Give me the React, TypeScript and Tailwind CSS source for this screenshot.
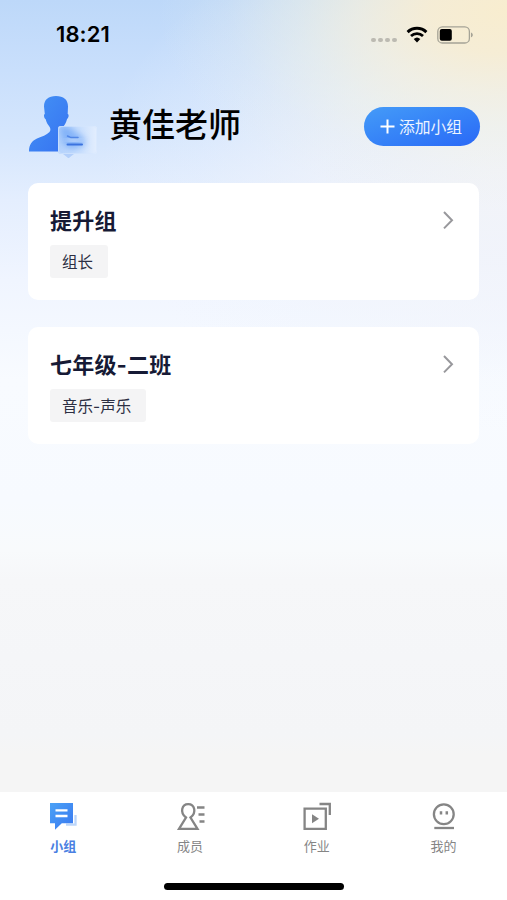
import type { ReactNode } from 'react';

interface Group {
  name: string;
  tag: string;
}

interface Tab {
  label: string;
  icon: ReactNode;
  active?: boolean;
}

const groups: Group[] = [
  { name: '提升组', tag: '组长' },
  { name: '七年级-二班', tag: '音乐-声乐' },
];

function StatusBar(): ReactNode {
  return (
    <div className="flex h-[69px] items-center justify-between pr-[33px] pl-[56px]">
      <span className="mb-[1px] font-['Inter'] text-[22px] leading-none font-semibold tracking-[0.1px] text-black">
        18:21
      </span>
      <div className="flex items-center">
        <div className="mt-[11px] mr-[9px] flex gap-[2.4px]">
          <i className="size-[4.6px] rounded-full bg-[#bcbab2]" />
          <i className="size-[4.6px] rounded-full bg-[#bcbab2]" />
          <i className="size-[4.6px] rounded-full bg-[#bcbab2]" />
          <i className="size-[4.6px] rounded-full bg-[#bcbab2]" />
        </div>
        <svg width="22" height="17" viewBox="0 0 22 17" className="mr-[9px]">
          <path d="M1.6 6.1a13.6 13.6 0 0 1 18.8 0" fill="none" stroke="#000" strokeWidth="3" />
          <path d="M5 10a8.7 8.7 0 0 1 12 0" fill="none" stroke="#000" strokeWidth="2.8" />
          <path d="M11 16.4 7.7 13a4.8 4.8 0 0 1 6.6 0Z" fill="#000" />
        </svg>
        <svg width="37" height="18" viewBox="0 0 37 18">
          <rect x="0.8" y="0.8" width="31.6" height="16.2" rx="4.6" fill="none" stroke="#a5a396" strokeWidth="1.3" />
          <rect x="2.8" y="3" width="12" height="11.8" rx="2" fill="#000" />
          <path d="M34 6.5c2.4.8 2.4 4 0 4.8Z" fill="#a5a396" />
        </svg>
      </div>
    </div>
  );
}

function Avatar(): ReactNode {
  return (
    <svg width="72" height="66" viewBox="0 0 72 66" className="mt-[4px]">
      <defs>
        <linearGradient id="person" x1="0" y1="0" x2="1" y2="1">
          <stop offset="0" stopColor="#4493f5" />
          <stop offset="1" stopColor="#3672f1" />
        </linearGradient>
        <linearGradient id="bubble" x1="0" y1="0" x2="1" y2="0">
          <stop offset="0" stopColor="#b4d2fc" />
          <stop offset="0.55" stopColor="#c9dffd" />
          <stop offset="1" stopColor="#e3eefe" />
        </linearGradient>
        <clipPath id="bubbleClip">
          <rect x="31" y="31" width="39" height="28" rx="3" />
        </clipPath>
        <clipPath id="personClip">
          <path d="M0 0h72v31H34a3 3 0 0 0-3 3v23H0Z" />
        </clipPath>
        <filter id="soft" x="-50%" y="-50%" width="200%" height="200%">
          <feGaussianBlur stdDeviation="3" />
        </filter>
      </defs>
      <path
        d="M29 1C36.500 1 41 4.500 41 11.500L40.700 19c1.500.300 1.100 3.800-.7 5.200-1 4-2.800 6.300-4.500 8.300V56.500H2C2 49.500 5 46 10 43.600c5-2.300 9.500-3.300 12.500-6.600 1.500-2 1-4-.500-6-1.600-2-2.600-3.800-3.300-6.800-1.800-1.100-2.200-4.900-.900-5.200L17 11.500C17 4.500 21.500 1 29 1Z"
        fill="url(#person)"
        clipPath="url(#personClip)"
      />
      <rect x="31" y="31" width="39" height="28" rx="3" fill="url(#bubble)" />
      <path d="M36 59h11l-4.500 3.500q-1 1-2 0Z" fill="#b3cffa" />
      <g clipPath="url(#bubbleClip)">
        <path d="M32 31h9l17 13-1 7-13 3-8-5Z" fill="#5595f5" opacity="0.55" filter="url(#soft)" />
        <path d="M40 44q4 2 14 2" fill="none" stroke="#e4effe" strokeWidth="5" opacity="0.7" filter="url(#soft)" />
      </g>
      <rect x="31.5" y="31.5" width="38" height="27" rx="3" fill="none" stroke="#d6e6fd" strokeWidth="1" opacity="0.6" />
      <path d="M40.500 41 44 42.600h7" fill="none" stroke="#3b73df" strokeWidth="1.500" strokeLinecap="round" opacity="0.7" />
      <path d="M40.500 49.500h14.500" stroke="#3b73df" strokeWidth="2" strokeLinecap="round" />
    </svg>
  );
}

function Header(): ReactNode {
  return (
    <header className="flex h-[114px] items-center pr-[27px] pl-[27px]">
      <Avatar />
      <h1 className="mb-px ml-[10px] flex-1 text-[33px] leading-none font-medium text-black">黄佳老师</h1>
      <button className="flex h-[39px] w-[116px] items-center justify-center gap-[4px] rounded-full bg-linear-to-br from-[#459bf8] to-[#2b68f6] pr-[2px] text-[#edf4ff]">
        <svg width="15" height="15" viewBox="0 0 15 15">
          <path d="M7.500.500v14M.500 7.500h14" stroke="#fff" strokeWidth="2" />
        </svg>
        <span className="pt-[3px] text-[15.8px] leading-none">添加小组</span>
      </button>
    </header>
  );
}

function GroupCard({ group }: { group: Group }): ReactNode {
  return (
    <section className="flex h-[117px] items-start justify-between rounded-[10px] bg-white px-[22px]">
      <div className="flex flex-col items-start pt-[25px]">
        <h2 className="text-[22px] leading-[26px] font-bold tracking-[0.2px] text-[#161a35]">{group.name}</h2>
        <span className="mt-[11px] flex h-[33px] items-center rounded-[3px] bg-[#f4f4f5] pt-[2px] pr-[15px] pl-[12px] text-[15.5px] leading-none text-[#2c2f43]">
          {group.tag}
        </span>
      </div>
      <svg width="12" height="20" viewBox="0 0 12 20" className="mt-[27px] mr-[3px]">
        <path d="m2 2 8 8.200-8 8.200" fill="none" stroke="#98989c" strokeWidth="2" />
      </svg>
    </section>
  );
}

const tabs: Tab[] = [
  {
    label: '小组',
    active: true,
    icon: (
      <svg width="30" height="30" viewBox="0 0 30 30">
        <defs>
          <linearGradient id="chat" x1="0" y1="0" x2="1" y2="1">
            <stop offset="0" stopColor="#4ba2f6" />
            <stop offset="1" stopColor="#3978f0" />
          </linearGradient>
        </defs>
        <path d="M27.500 13v9.700H18" fill="none" stroke="#bcd6fa" strokeWidth="2.300" />
        <path d="M2 1h23v20.200H13.800L7 27.700v-6.500H2Z" fill="url(#chat)" />
        <path d="M7.500 8.300h12M7.500 14h12" stroke="#fff" strokeWidth="2.300" />
      </svg>
    ),
  },
  {
    label: '成员',
    icon: (
      <svg width="30" height="30" viewBox="0 0 30 30" fill="none" stroke="#858585" strokeWidth="2.300">
        <path d="M11 15.500C4.500 10.500 6.800 2.200 13.200 2.200S22 10.500 15.500 15.500l7 11.300H4Z" />
        <path d="M22 5.500h7.500M23.500 12.500h6M24.500 19.500h5" />
      </svg>
    ),
  },
  {
    label: '作业',
    icon: (
      <svg width="30" height="30" viewBox="0 0 30 30" fill="none" stroke="#858585" strokeWidth="2.300">
        <path d="M2.600 6.600h21.200v20.200H2.600Z" />
        <path d="M17.500 2h10.300v11" />
        <path d="M10 12.300v9l7-4.500Z" fill="#858585" stroke="none" />
      </svg>
    ),
  },
  {
    label: '我的',
    icon: (
      <svg width="30" height="30" viewBox="0 0 30 30" fill="none" stroke="#858585" strokeWidth="2.300">
        <circle cx="14.800" cy="12.200" r="9.900" />
        <path d="M5.300 26h19.700" />
        <path d="M12 9.300v3.200M17.800 9.300v3.200" strokeWidth="2.500" />
      </svg>
    ),
  },
];

function TabBar(): ReactNode {
  return (
    <nav className="flex h-[108px] flex-col items-center bg-white">
      <div className="grid w-full grid-cols-4 pt-[10px]">
        {tabs.map((tab) => (
          <div key={tab.label} className="flex flex-col items-center">
            {tab.icon}
            <span
              className={
                tab.active
                  ? 'mt-[7px] text-[13px] leading-[14px] font-bold text-[#4a80e2]'
                  : 'mt-[7px] text-[13px] leading-[14px] text-[#858585]'
              }
            >
              {tab.label}
            </span>
          </div>
        ))}
      </div>
      <div className="mt-auto mb-[10px] ml-px h-[7px] w-[180px] rounded-full bg-black" />
    </nav>
  );
}

export default function App(): ReactNode {
  return (
    <div className="flex h-[900px] w-[507px] flex-col overflow-hidden bg-[radial-gradient(ellipse_350px_200px_at_507px_10px,#f8edcf_0%,#f7edd3f0_22%,#f4efdcb8_42%,#eff0e278_60%,#e8ede830_80%,#e4ecf200_100%),radial-gradient(ellipse_400px_260px_at_500px_170px,#f3f4f8_0%,#f2f4faa8_45%,#f0f4fc40_75%,#eff5fd00_100%),linear-gradient(180deg,#bdd8f9_0px,#c9dffc_70px,#d5e6fd_140px,#e4eefe_200px,#f0f5ff_280px,#f8fbff_380px,#f7faff_500px,#f8fafc_550px,#f6f7f9_580px,#f4f5f7_735px,#f5f5f5_755px)] font-['Inter','Noto_Sans_CJK_SC',sans-serif]">
      <StatusBar />
      <Header />
      <main className="flex flex-1 flex-col gap-[27px] px-[28px]">
        {groups.map((group) => (
          <GroupCard key={group.name} group={group} />
        ))}
      </main>
      <TabBar />
    </div>
  );
}
